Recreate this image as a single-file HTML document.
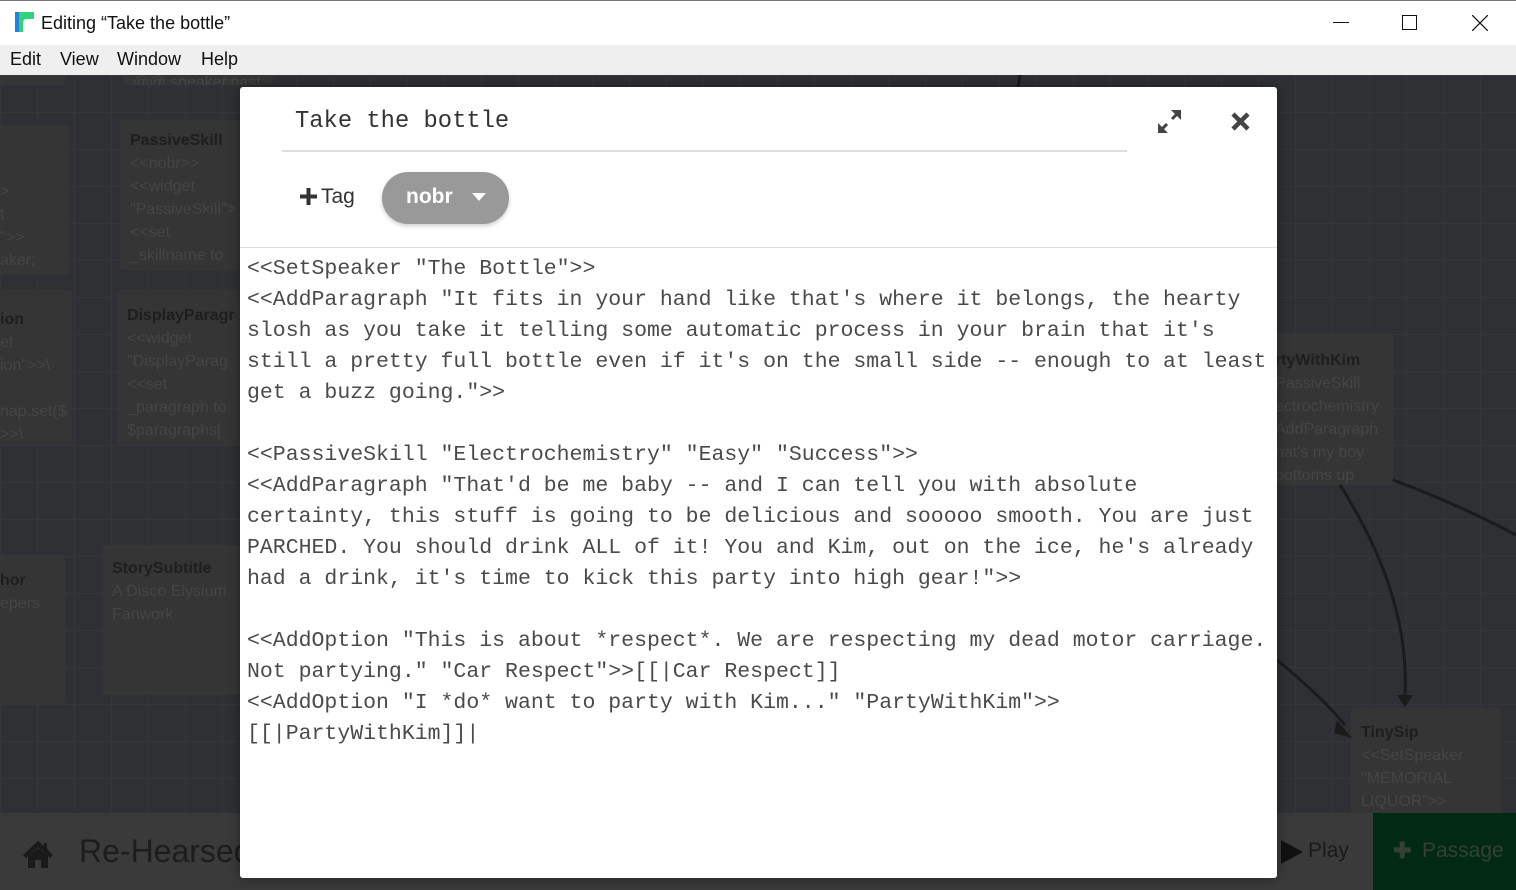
<!DOCTYPE html>
<html><head><style>
*{margin:0;padding:0;box-sizing:border-box}
body{width:1516px;height:890px;overflow:hidden;position:relative;background:#2f3033;font-family:"Liberation Sans",sans-serif}
.tb{position:absolute;left:0;top:0;width:1516px;height:45px;background:#fff;border-top:1px solid #777}
.menu{position:absolute;left:0;top:45px;width:1516px;height:30px;background:#efefef;font-size:18px;color:#111}
.menu span{position:absolute;top:4px}
.canvas{position:absolute;left:0;top:75px;width:1516px;height:738px;background-color:#2f3033;background-image:linear-gradient(#34363a 1px,transparent 1px),linear-gradient(90deg,#34363a 1px,transparent 1px);background-size:37px 37px;overflow:hidden}
.card{position:absolute;background:#353535;border-radius:3px;color:#454545;font-size:16px;line-height:23px;padding:6px 10px;overflow:hidden;white-space:nowrap}
.card b{color:#1e1e1e;display:block}
.bottom{position:absolute;left:0;top:813px;width:1516px;height:77px;background:#3a3a3a}
.dlg{position:absolute;left:240px;top:87px;width:1037px;height:791px;background:#fff;border-radius:3px;box-shadow:0 0 12px rgba(0,0,0,.4)}
.mono{font-family:"Liberation Mono",monospace}
pre{position:absolute;left:7px;top:167px;font-size:21.5px;line-height:31px;color:#4a4a4a;font-family:"Liberation Mono",monospace}
</style></head><body>
<div class="tb">
<svg style="position:absolute;left:15px;top:11px" width="19" height="20"><rect x="0" y="0" width="6" height="20" fill="#2a7de1"/><path d="M4 0H19V7H11Q8 7 8 12V20H4Z" fill="#2dd57a"/></svg>
<span style="position:absolute;left:41px;top:12px;font-size:18px;color:#111">Editing “Take the bottle”</span>
<div style="position:absolute;left:1333px;top:21px;width:16px;height:1px;background:#111"></div>
<div style="position:absolute;left:1402px;top:14px;width:15px;height:15px;border:1px solid #111"></div>
<svg style="position:absolute;left:1472px;top:14px" width="16" height="16"><path d="M0 0L16 16M16 0L0 16" stroke="#111" stroke-width="1.2"/></svg>
</div>
<div class="menu"><span style="left:10px">Edit</span><span style="left:60px">View</span><span style="left:117px">Window</span><span style="left:201px">Help</span></div>
<div class="canvas">
<div class="card" style="left:-10px;top:-10px;width:75px;height:20px"></div>
<div class="card" style="left:123px;top:-10px;width:150px;height:20px">@@.speaker.past</div>
<div class="card" style="left:-10px;top:50px;width:80px;height:150px;padding-top:55px">&gt;<br>t<br>"&gt;&gt;<br>aker;<br>- @@</div>
<div class="card" style="left:120px;top:45px;width:140px;height:150px;padding-top:9px"><b>PassiveSkill</b>&lt;&lt;nobr&gt;&gt;<br>&lt;&lt;widget<br>"PassiveSkill"&gt;<br>&lt;&lt;set<br>_skillname to</div>
<div class="card" style="left:-10px;top:215px;width:82px;height:155px;padding-top:18px"><b>ion</b>et<br>ion"&gt;&gt;\<br><br>nap.set($<br>&gt;&gt;\</div>
<div class="card" style="left:117px;top:215px;width:140px;height:155px;padding-top:14px"><b>DisplayParagr</b>&lt;&lt;widget<br>"DisplayParag<br>&lt;&lt;set<br>_paragraph to<br>$paragraphs[</div>
<div class="card" style="left:-10px;top:480px;width:75px;height:150px;padding-top:14px"><b>hor</b>epers</div>
<div class="card" style="left:102px;top:470px;width:150px;height:150px;padding-top:12px"><b>StorySubtitle</b>A Disco Elysium<br>Fanwork</div>
<div class="card" style="left:1265px;top:258px;width:128px;height:152px;padding-top:16px"><b>rtyWithKim</b>PassiveSkill<br>ectrochemistry<br>AddParagraph<br>nat's my boy<br>oottoms up</div>
<div class="card" style="left:1351px;top:633px;width:150px;height:110px;padding-top:13px"><b>TinySip</b>&lt;&lt;SetSpeaker<br>"MEMORIAL<br>LIQUOR"&gt;&gt;</div>
<svg style="position:absolute;left:0;top:0" width="1516" height="738"><g stroke="#1b1b1b" stroke-width="3" fill="none"><path d="M1340 410Q1410 520 1405 620"/><path d="M1393 405Q1460 430 1516 460"/><path d="M1277 585Q1320 620 1345 650"/><path d="M1020 0L1018 12"/></g><path d="M1397 620L1413 620L1405 632Z" fill="#1b1b1b"/><path d="M1337 645L1352 663L1334 658Z" fill="#1b1b1b"/></svg>
</div>
<div class="bottom">
<svg style="position:absolute;left:22px;top:27px" width="32" height="28"><path d="M16 1L1 15L4 18L16 7L28 18L31 15L25 9V3H22V6Z" fill="#1a1a1a"/><path d="M6 16L16 8L26 16V28H19V20H13V28H6Z" fill="#1a1a1a"/></svg>
<span style="position:absolute;left:79px;top:20px;font-size:32px;color:#1d1d1d">Re-Hearsed</span>
<svg style="position:absolute;left:1281px;top:27px" width="22" height="24"><path d="M0 0L22 12L0 24Z" fill="#111"/></svg>
<span style="position:absolute;left:1308px;top:26px;font-size:21px;color:#1a1a1a">Play</span>
<div style="position:absolute;left:1373px;top:0;width:143px;height:77px;background:#022a12"><span style="position:absolute;left:20px;top:25px;font-size:22px;color:#324035;font-weight:bold">✚</span><span style="position:absolute;left:49px;top:26px;font-size:21px;color:#344037">Passage</span></div>
</div>
<div class="dlg">
<div class="mono" style="position:absolute;left:55px;top:21px;font-size:23.8px;color:#333">Take the bottle</div>
<div style="position:absolute;left:42px;top:63px;width:845px;height:2px;background:#ddd"></div>
<svg style="position:absolute;left:917px;top:22px" width="25" height="25"><path d="M2 23L10 15M23 2L15 10" stroke="#444" stroke-width="3"/><path d="M1 14V24H11Z M24 1H14L24 11Z" fill="#444"/></svg>
<svg style="position:absolute;left:991px;top:25px" width="19" height="19"><path d="M2 2L17 17M17 2L2 17" stroke="#444" stroke-width="4.5"/></svg>
<svg style="position:absolute;left:60px;top:101px" width="17" height="17"><path d="M8.5 0V17M0 8.5H17" stroke="#333" stroke-width="4"/></svg>
<span style="position:absolute;left:81px;top:98px;font-size:21px;color:#333">Tag</span>
<div style="position:absolute;left:142px;top:85px;width:127px;height:52px;border-radius:26px;background:#999;box-shadow:0 2px 4px rgba(0,0,0,.2)"><span style="position:absolute;left:24px;top:13px;font-size:21px;color:#fff;font-weight:bold">nobr</span><svg style="position:absolute;left:90px;top:21px" width="14" height="8"><path d="M0 0H14L7 8Z" fill="#fff"/></svg></div>
<div style="position:absolute;left:0;top:160px;width:1037px;height:1px;background:#ddd"></div>
<pre>&lt;&lt;SetSpeaker "The Bottle"&gt;&gt;
&lt;&lt;AddParagraph "It fits in your hand like that's where it belongs, the hearty
slosh as you take it telling some automatic process in your brain that it's
still a pretty full bottle even if it's on the small side -- enough to at least
get a buzz going."&gt;&gt;

&lt;&lt;PassiveSkill "Electrochemistry" "Easy" "Success"&gt;&gt;
&lt;&lt;AddParagraph "That'd be me baby -- and I can tell you with absolute
certainty, this stuff is going to be delicious and sooooo smooth. You are just
PARCHED. You should drink ALL of it! You and Kim, out on the ice, he's already
had a drink, it's time to kick this party into high gear!"&gt;&gt;

&lt;&lt;AddOption "This is about *respect*. We are respecting my dead motor carriage.
Not partying." "Car Respect"&gt;&gt;[[|Car Respect]]
&lt;&lt;AddOption "I *do* want to party with Kim..." "PartyWithKim"&gt;&gt;
[[|PartyWithKim]]|</pre>
</div>
</body></html>
